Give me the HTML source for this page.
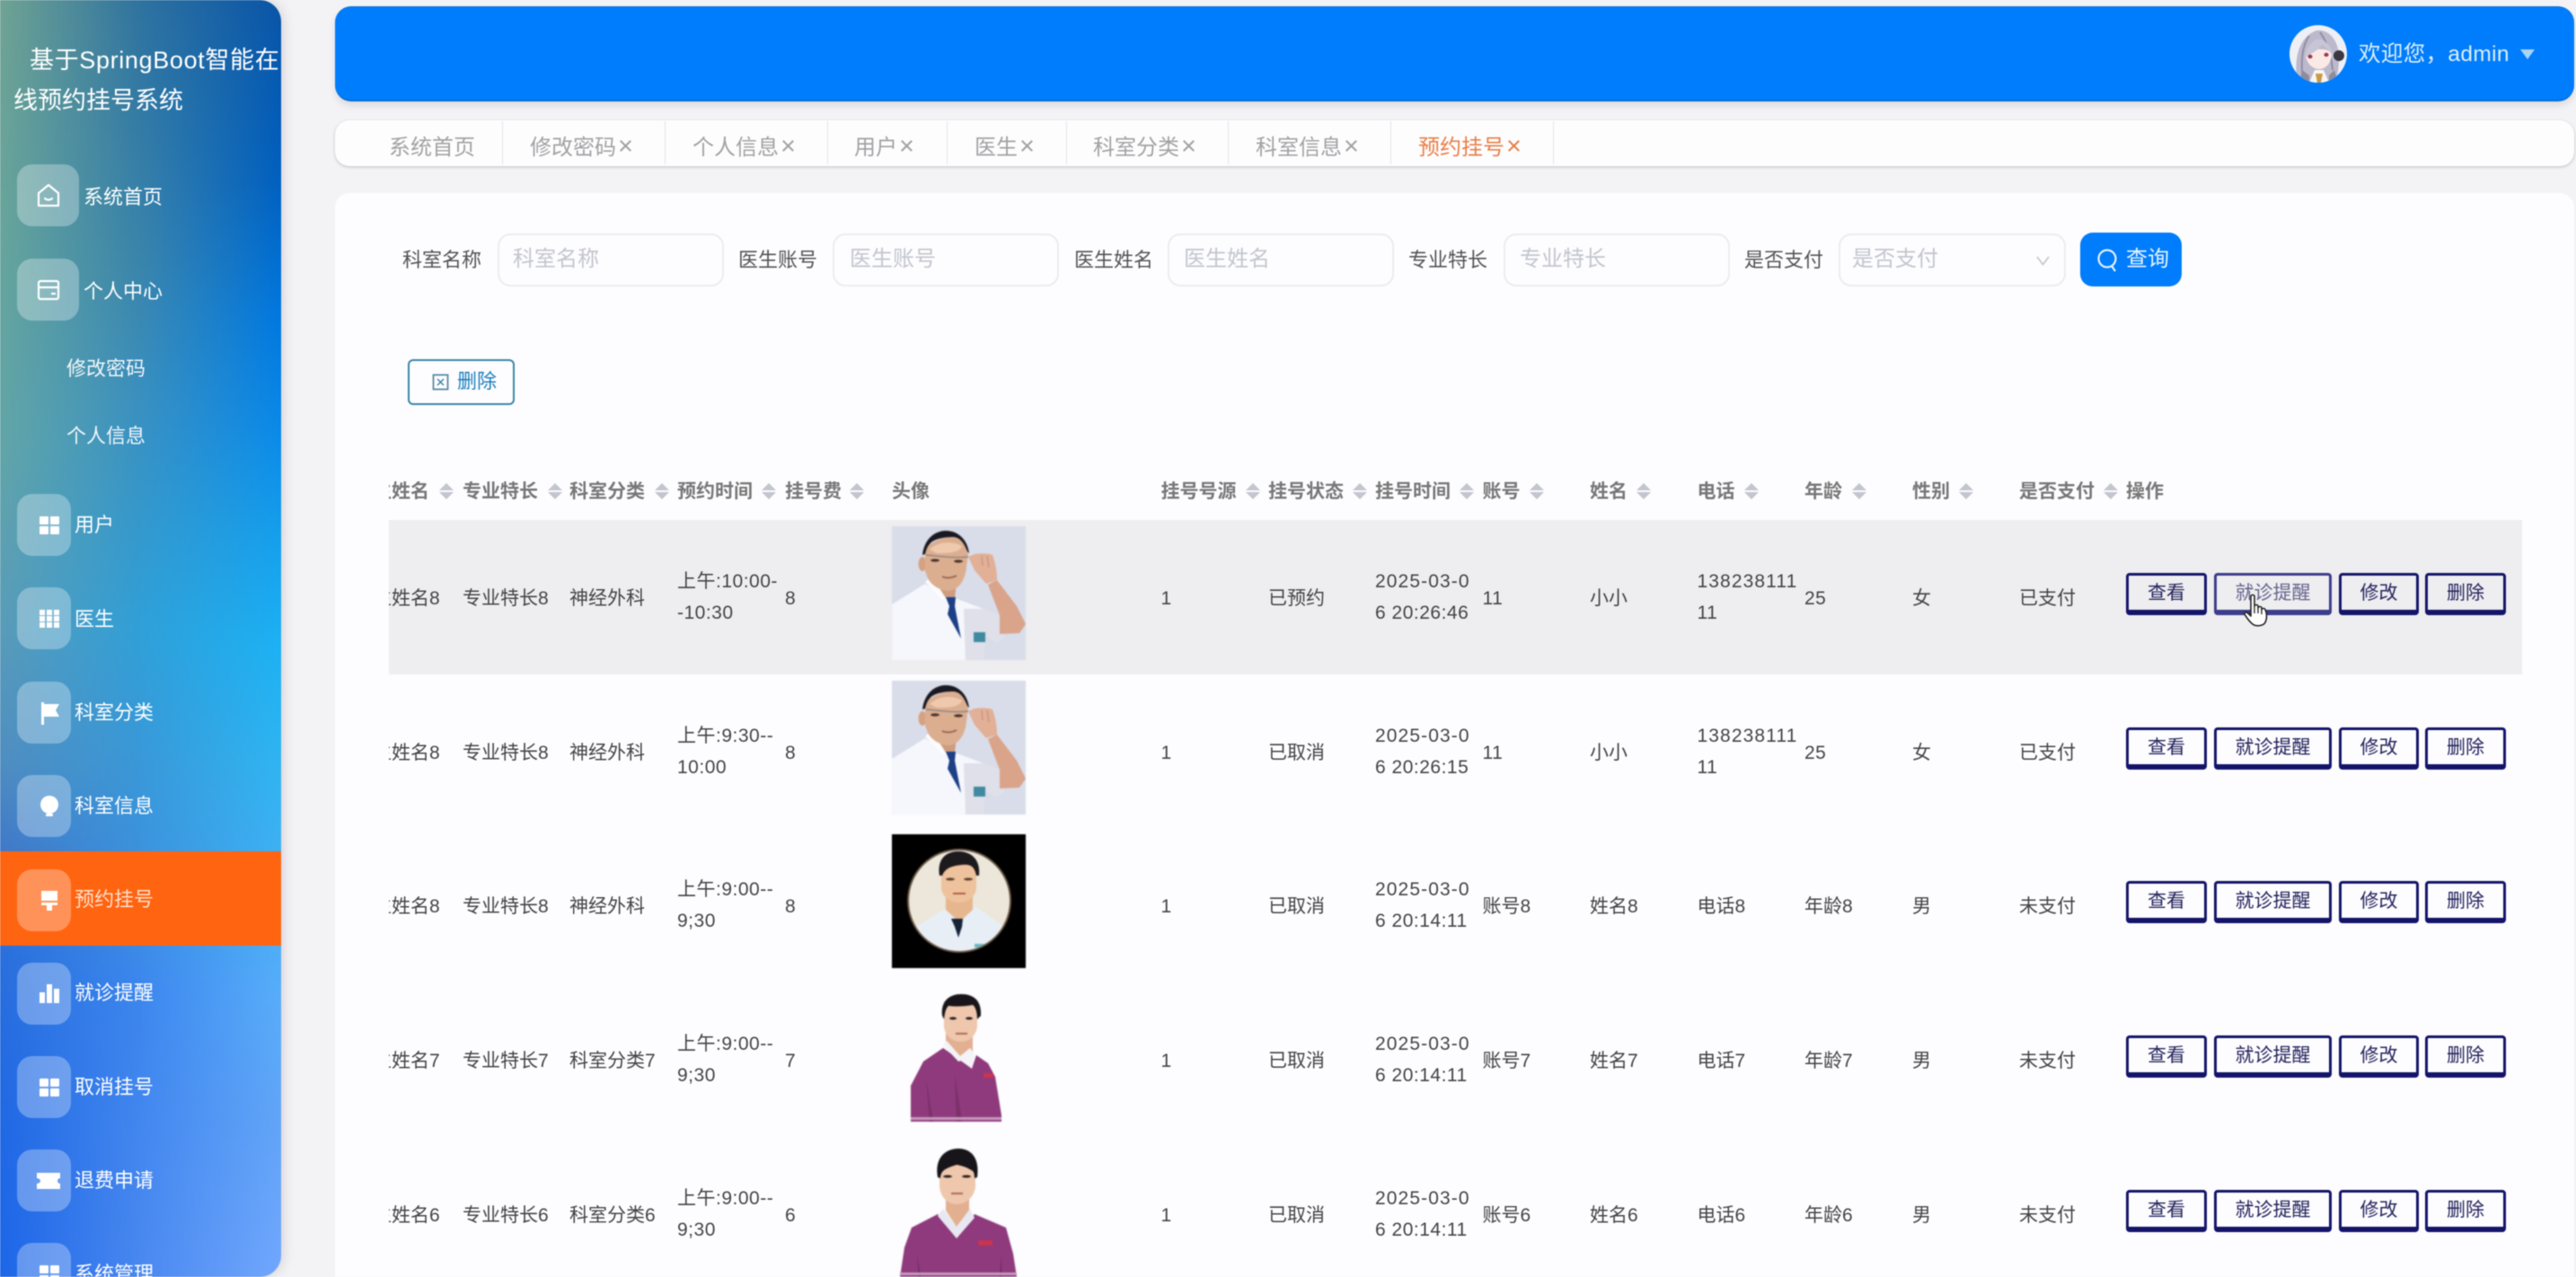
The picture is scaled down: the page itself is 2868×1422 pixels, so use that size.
<!DOCTYPE html>
<html lang="zh-CN">
<head>
<meta charset="utf-8">
<title>预约挂号</title>
<style>
*{box-sizing:border-box;margin:0;padding:0}
html,body{width:2868px;height:1422px;overflow:hidden;background:#f3f2f5;font-family:"Liberation Sans","Noto Sans CJK SC",sans-serif;color:#555}
#root{position:absolute;left:0;top:0;width:2868px;height:1422px;overflow:hidden;background:#f3f2f5;filter:blur(.45px)}
.a{position:absolute;white-space:nowrap}
#side{position:absolute;left:0;top:0;width:313px;height:1422px;border-radius:0 24px 24px 0;overflow:hidden}
#wrapshadow{position:absolute;left:0;top:0;width:313px;height:1422px;border-radius:0 24px 24px 0;box-shadow:0 0 16px rgba(0,0,0,.16)}
.gr{position:absolute;inset:0}
#g1{background:linear-gradient(180deg,#0a55a8 0,#0060c0 200px,#0078e0 350px,#0a8aea 480px,#15a0ee 600px,#1db2f5 720px,#30b5f2 850px,#45b0f5 1000px,#58aefa 1100px,#62a5f8 1250px,#72a8fe 1422px)}
#g2{background:linear-gradient(180deg,#2f73a0 0,#3a85ac 300px,#3a90c0 450px,#30a0d8 700px,#3a98d8 850px,#3c90e0 1000px,#3c86ee 1100px,#4a88f0 1422px);-webkit-mask-image:linear-gradient(90deg,#000 50%,transparent 100%);mask-image:linear-gradient(90deg,#000 50%,transparent 100%)}
#g3{background:linear-gradient(180deg,#70a393 0,#66a59d 300px,#62a5a8 500px,#5a9bb8 700px,#4f8dc0 850px,#4078c8 950px,#2a6fdc 1060px,#2068e4 1250px,#1c66e8 1422px);-webkit-mask-image:linear-gradient(90deg,#000 0,transparent 50%);mask-image:linear-gradient(90deg,#000 0,transparent 50%)}
#active{position:absolute;left:0;top:948px;width:313px;height:105px;background:#ff6411}
.title{position:absolute;color:#fff;font-size:27px;line-height:45px;white-space:nowrap}
.box{position:absolute;left:19px;width:60px;height:69px;border-radius:17px;background:rgba(255,255,255,.3)}
.box.w{width:69px}
.box svg{position:absolute;left:22px;top:20px;width:26px;height:30px;fill:#fff}
.mi{position:absolute;color:#fff;font-size:22px;line-height:30px;white-space:nowrap}
#hdr{position:absolute;left:373px;top:7px;width:2493px;height:106px;background:#007dfc;border-radius:18px;box-shadow:0 5px 8px rgba(0,0,0,.09);border-top:1px solid #0d6fd6;border-bottom:2px solid #0a6ed2}
#tabs{position:absolute;left:373px;top:134px;width:2493px;height:51px;background:#fefdfe;border-radius:16px;box-shadow:0 1px 3px rgba(0,0,0,.22)}
.sep{position:absolute;top:135px;width:1px;height:48px;background:#e4e3e6}
.tab{position:absolute;top:147px;font-size:24px;line-height:36px;color:#a2a2a4;white-space:nowrap}
.tab i{font-style:normal;font-size:29px;line-height:30px;margin-left:2px}
#panel{position:absolute;left:373px;top:215px;width:2493px;height:1207px;background:#fdfcfe;border-radius:16px 16px 0 0}
.lab{position:absolute;top:274px;font-size:22px;line-height:32px;color:#535355;white-space:nowrap}
.inp{position:absolute;top:260px;height:59px;width:252px;border:2px solid #ececef;border-radius:14px;background:#fdfcfe}
.ph{position:absolute;top:271px;font-size:24px;line-height:36px;color:#c3c6cf;white-space:nowrap}
#tb{position:absolute;left:433px;top:510px;width:2375px;height:912px;overflow:hidden}
.h{position:absolute;top:21px;font-size:21px;line-height:34px;color:#666;font-weight:700;white-space:nowrap;opacity:.88}
.s{position:absolute;top:28px;width:16px;height:18px}
.s:before,.s:after{content:"";position:absolute;left:0;width:0;height:0;border-left:8px solid transparent;border-right:8px solid transparent}
.s:before{top:0;border-bottom:8px solid #c3c5cf}
.s:after{bottom:0;border-top:8px solid #c3c5cf}
.r{position:absolute;left:0;width:2375px;height:172px}
.r.hv{background:#eeedef}
.c{position:absolute;top:70px;font-size:21px;line-height:35px;color:#444446;white-space:nowrap}
.c.t{top:51px}
.n{letter-spacing:.5px}
.w1{letter-spacing:1.1px}
.im{position:absolute;left:560px;top:7px;width:149px;height:149px;display:block;filter:blur(.5px)}
.b{position:absolute;top:59px;height:47px;border:3px solid #14146a;border-bottom-width:6px;border-radius:4px;font-size:21px;line-height:39px;text-align:center;color:#25255f;background:transparent;white-space:nowrap}
.b1{left:1934px;width:90px}
.b2{left:2032px;width:131px}
.b3{left:2171px;width:89px}
.b4{left:2267px;width:90px}
.b.hov{border-color:#3d3d8d;color:#66668f}
</style>
</head>
<body>
<svg width="0" height="0" style="position:absolute">
<defs>
<symbol id="d1" viewBox="0 0 149 149">
<rect width="149" height="149" fill="#d9dde9"/>
<path d="M0 87L37 64L60 80L70 80L102 92L120 99L125 124L117 129L104 122L102 149L0 149Z" fill="#f5f7fc"/>
<path d="M80 92L102 92L120 99L125 124L117 129L104 122L102 149L82 149Z" fill="#dfe0e9"/>
<path d="M37 62L45 55L70 72L62 82L56 82Z" fill="#fbfcfe"/>
<path d="M46 58L72 62L70 80L60 80Z" fill="#cf9c80"/>
<ellipse cx="34" cy="42" rx="4.500" ry="8" fill="#d5a283"/>
<path d="M37 28C40 18 55 12 69 12C78 14 84 22 85 30L83 45C82 58 76 70 64 72C54 72 44 66 40 58L37 50Z" fill="#dcae90"/>
<path d="M42 26C50 18 65 15 78 22C76 30 60 30 50 30Z" fill="#efc9ae"/>
<path d="M34 32C36 14 48 5 60 5C74 5 84 15 86 30L84 28C80 18 76 13 69 12C58 12 46 14 42 20C39 23 38 27 37 31Z" fill="#1a1820"/>
<path d="M38 32C50 33 70 36 85 34" stroke="#8c8584" stroke-width="1.400" fill="none"/>
<ellipse cx="48" cy="38" rx="5" ry="1.600" fill="#4c342a"/><ellipse cx="74" cy="39" rx="5" ry="1.600" fill="#4c342a"/>
<path d="M56 56C60 58 66 58 72 55" stroke="#95604c" stroke-width="1.800" fill="none"/>
<path d="M60 79L71 79L70 89L77 125L62 98L64 89Z" fill="#1c3f86"/>
<path d="M117 60L139 89L149 109L142 119L120 120L120 99L107 65Z" fill="#d9a48a"/>
<path d="M85 34L92 31C98 30 108 30 112 32C115 40 117 50 117 60L105 64L92 49Z" fill="#e2af97"/>
<path d="M100 33L101 44M106 33L108 46" stroke="#c28c72" stroke-width="1"/>
<rect x="91" y="118" width="13" height="11" fill="#3f8aa0"/>
</symbol>
<symbol id="d2" viewBox="0 0 149 149">
<rect width="149" height="149" fill="#000"/>
<circle cx="75" cy="74" r="58" fill="#6b5a48"/>
<circle cx="75" cy="74" r="56" fill="#ece7da"/>
<clipPath id="cc"><circle cx="75" cy="74" r="56"/></clipPath>
<g clip-path="url(#cc)">
<path d="M27 103L57 84L94 81L125 103L128 140H22Z" fill="#e8eef6"/>
<path d="M60 68H90V84L75 98L60 84Z" fill="#e6b78e"/>
<path d="M55 28H94V60C93 70 84 76 75 76C65 76 56 70 55 60Z" fill="#eec29c"/>
<path d="M53 46C50 28 60 19 74 19C88 19 99 28 97 46L94 46C92 36 88 33 78 34C70 35 60 36 56 46Z" fill="#1d1a1e"/>
<ellipse cx="65" cy="50" rx="5" ry="1.500" fill="#5a4030"/><ellipse cx="85" cy="50" rx="5" ry="1.500" fill="#5a4030"/>
<path d="M68 66H82" stroke="#a8523c" stroke-width="1.800"/>
<path d="M66 94H79L78 103L74 115L70 103Z" fill="#152238"/>
<rect x="92" y="122" width="16" height="4" fill="#6cb7c4"/>
</g>
</symbol>
<symbol id="d3" viewBox="0 0 149 149">
<path d="M21 108L35 81L57 66L89 89L94 74L107 83L115 98L122 141L122 148L21 148Z" fill="#8e3a7c"/>
<path d="M70 95L78 148H72ZM38 100L46 148H42Z" fill="#7c3069"/>
<rect x="21" y="143" width="101" height="3" fill="#c79ac0"/>
<path d="M60 48H90V70L78 80L60 66Z" fill="#e2b090"/>
<path d="M57 63L61 58L76 75L87 66L92 73L89 89L78 80L74 81Z" fill="#f4f3f7"/>
<path d="M58 14H95V42C94 52 86 59 77 59C67 59 59 52 58 42Z" fill="#eec7ac"/>
<path d="M56 30C54 12 66 6 77 6C90 6 100 12 99 30L95 34C95 26 93 20 90 18C80 20 70 20 63 19C60 22 59 26 58 34Z" fill="#17151a"/>
<ellipse cx="68" cy="33" rx="4" ry="1.500" fill="#2a2020"/><ellipse cx="86" cy="33" rx="4" ry="1.500" fill="#2a2020"/>
<path d="M71 50H84" stroke="#a9604c" stroke-width="1.800"/>
<rect x="102" y="94" width="11" height="5" fill="#c8354f"/>
</symbol>
<symbol id="d4" viewBox="0 0 149 149">
<path d="M51 79L22 94L14 116L9 149H139L135 123L127 94L92 79L72 106Z" fill="#8e3a7c"/>
<path d="M28 125L32 149H30ZM122 125L120 149H122Z" fill="#6f2a60"/>
<rect x="9" y="144" width="130" height="3" fill="#c79ac0"/>
<path d="M60 55H86V75L72 93L60 75Z" fill="#e2b090"/>
<path d="M51 81L57 73L72 93L87 73L92 83L72 106Z" fill="#e8e8f2"/>
<path d="M53 18H93V48C92 60 82 68 72 68C62 68 54 60 53 48Z" fill="#eec7ac"/>
<path d="M51 38C47 16 60 6 74 6C88 6 98 16 95 38L92 39C92 34 91 32 90 31C84 27 78 25 72 24C66 26 60 28 57 31C55 33 54 36 54 39Z" fill="#17151a"/>
<ellipse cx="62" cy="37" rx="5" ry="1.500" fill="#2a2020"/><ellipse cx="83" cy="37" rx="5" ry="1.500" fill="#2a2020"/>
<path d="M66 56H79" stroke="#a9604c" stroke-width="1.800"/>
<rect x="96" y="108" width="16" height="6" fill="#c8354f"/>
</symbol>
<symbol id="g4" viewBox="0 0 26 30"><rect x="2" y="5" width="10" height="9" rx="1"/><rect x="14" y="5" width="10" height="9" rx="1"/><rect x="2" y="16" width="10" height="9" rx="1"/><rect x="14" y="16" width="10" height="9" rx="1"/></symbol>
</defs>
</svg>

<div id="root">
<div id="wrapshadow"></div>
<div id="side">
<div class="gr" id="g1"></div><div class="gr" id="g2"></div><div class="gr" id="g3"></div>
<div id="active"></div>
<div class="title" style="left:33px;top:45px;letter-spacing:.65px">基于SpringBoot智能在</div>
<div class="title" style="left:15px;top:90px">线预约挂号系统</div>

<div class="box w" style="top:183px"><svg viewBox="0 0 26 30" style="fill:none;stroke:#fff;stroke-width:2.2"><path d="M2 12L13 3L24 12V26H2Z" stroke-linejoin="round"/><path d="M9 18C11 20 15 20 17 18" stroke-linecap="round"/></svg></div>
<div class="mi" style="left:93px;top:205px">系统首页</div>
<div class="box w" style="top:288px"><svg viewBox="0 0 26 30" style="fill:none;stroke:#fff;stroke-width:2.2"><rect x="2" y="5" width="22" height="20" rx="2"/><path d="M2 12H24M16 19H21"/></svg></div>
<div class="mi" style="left:93px;top:310px">个人中心</div>
<div class="mi" style="left:74px;top:396px;opacity:.92">修改密码</div>
<div class="mi" style="left:74px;top:471px;opacity:.92">个人信息</div>

<div class="box" style="top:550px"><svg viewBox="0 0 26 30" style="left:23px"><use href="#g4"/></svg></div>
<div class="mi" style="left:83px;top:570px">用户</div>
<div class="box" style="top:654px"><svg viewBox="0 0 26 30" style="left:23px"><path d="M2 5H8V11H2ZM10 5H16V11H10ZM18 5H24V11H18ZM2 12H8V18H2ZM10 12H16V18H10ZM18 12H24V18H18ZM2 19H8V25H2ZM10 19H16V25H10ZM18 19H24V25H18Z"/></svg></div>
<div class="mi" style="left:83px;top:675px">医生</div>
<div class="box" style="top:759px"><svg viewBox="0 0 26 30" style="left:23px"><path d="M4 3H7V5H24L20 12L24 19H7V28H4Z"/></svg></div>
<div class="mi" style="left:83px;top:779px">科室分类</div>
<div class="box" style="top:863px"><svg viewBox="0 0 26 30" style="left:23px"><circle cx="13" cy="13" r="10"/><rect x="9" y="23" width="8" height="3" rx="1"/></svg></div>
<div class="mi" style="left:83px;top:883px">科室信息</div>
<div class="box" style="top:968px"><svg viewBox="0 0 26 30" style="left:23px"><path d="M4 4H22V15H4ZM4 17H22V20H16V26H10V20H4Z"/></svg></div>
<div class="mi" style="left:83px;top:987px;color:#ffe0cc">预约挂号</div>
<div class="box" style="top:1072px"><svg viewBox="0 0 26 30" style="left:23px"><rect x="2" y="13" width="6" height="12"/><rect x="10" y="4" width="6" height="21"/><rect x="18" y="9" width="6" height="16"/></svg></div>
<div class="mi" style="left:83px;top:1091px">就诊提醒</div>
<div class="box" style="top:1176px"><svg viewBox="0 0 26 30" style="left:23px"><use href="#g4"/></svg></div>
<div class="mi" style="left:83px;top:1196px">取消挂号</div>
<div class="box" style="top:1280px"><svg viewBox="0 0 26 30" style="left:21px;width:28px"><path d="M0 6H26V12C24 12 23 13.500 23 15C23 16.500 24 18 26 18V24H0V18C2 18 4 16.500 4 15C4 13.500 2 12 0 12Z"/></svg></div>
<div class="mi" style="left:83px;top:1300px">退费申请</div>
<div class="box" style="top:1384px"><svg viewBox="0 0 26 30" style="left:23px"><use href="#g4"/></svg></div>
<div class="mi" style="left:83px;top:1404px">系统管理</div>
</div>

<div id="hdr"></div>
<svg class="a" style="left:2549px;top:28px" width="64" height="64" viewBox="0 0 64 64">
<clipPath id="av"><circle cx="32" cy="32" r="32"/></clipPath>
<g clip-path="url(#av)">
<rect width="64" height="64" fill="#eef0f6"/>
<path d="M9 64C5 42 8 14 30 6C46 4 56 20 55 38C55 50 53 58 50 64Z" fill="#bcb9cc"/>
<path d="M22 12C16 20 13 34 14 52M34 8C40 16 46 28 48 50" stroke="#918ea6" stroke-width="2" fill="none"/>
<path d="M18 32C18 26 46 24 47 32C47 42 40 49 33 49C26 49 18 42 18 32Z" fill="#fbe9e6"/>
<path d="M17 36C19 22 28 14 36 16C44 20 48 28 48 34C44 28 40 24 36 22C32 28 24 32 17 36Z" fill="#c8c5d6"/>
<ellipse cx="23" cy="35" rx="2.600" ry="2.200" fill="#a03a58"/><ellipse cx="41" cy="33" rx="2.600" ry="2.200" fill="#a03a58"/>
<path d="M22 64L28 50H38L44 64Z" fill="#f8f6f2"/><path d="M29 54H37L35 64H31Z" fill="#c89a4a"/>
<path d="M11 64L14 50L22 56L22 64ZM44 56L50 50L54 64H44Z" fill="#8d8b9c"/>
<circle cx="55" cy="34" r="6" fill="#3c3842"/>
</g>
</svg>
<div class="a" style="left:2626px;top:43px;font-size:24.500px;line-height:36px;color:#dceefd;letter-spacing:.35px">欢迎您，admin</div>
<svg class="a" style="left:2806px;top:55px" width="16" height="11" viewBox="0 0 16 11"><path d="M0 0H16L8 11Z" fill="#a9d4fb"/></svg>

<div id="tabs"></div>
<div class="sep" style="left:559px"></div><div class="sep" style="left:740px"></div><div class="sep" style="left:921px"></div><div class="sep" style="left:1054px"></div><div class="sep" style="left:1187px"></div><div class="sep" style="left:1367px"></div><div class="sep" style="left:1548px"></div><div class="sep" style="left:1729px"></div>
<div class="tab" style="left:433px">系统首页</div>
<div class="tab" style="left:590px">修改密码<i>×</i></div>
<div class="tab" style="left:771px">个人信息<i>×</i></div>
<div class="tab" style="left:951px">用户<i>×</i></div>
<div class="tab" style="left:1085px">医生<i>×</i></div>
<div class="tab" style="left:1217px">科室分类<i>×</i></div>
<div class="tab" style="left:1398px">科室信息<i>×</i></div>
<div class="tab" style="left:1579px;color:#e97f47">预约挂号<i>×</i></div>

<div id="panel"></div>
<div class="lab" style="left:448px">科室名称</div><div class="inp" style="left:554px"></div><div class="ph" style="left:571px">科室名称</div>
<div class="lab" style="left:822px">医生账号</div><div class="inp" style="left:927px"></div><div class="ph" style="left:946px">医生账号</div>
<div class="lab" style="left:1196px">医生姓名</div><div class="inp" style="left:1300px"></div><div class="ph" style="left:1318px">医生姓名</div>
<div class="lab" style="left:1568px">专业特长</div><div class="inp" style="left:1674px"></div><div class="ph" style="left:1692px">专业特长</div>
<div class="lab" style="left:1942px">是否支付</div><div class="inp" style="left:2047px;width:253px"></div><div class="ph" style="left:2062px">是否支付</div>
<svg class="a" style="left:2267px;top:285px" width="15" height="11" viewBox="0 0 15 11"><path d="M1 1L7.500 9.500L14 1" fill="none" stroke="#c3c6cf" stroke-width="1.600"/></svg>
<div class="a" style="left:2316px;top:259px;width:113px;height:60px;background:#007dfc;border-radius:14px"></div>
<svg class="a" style="left:2335px;top:276px" width="23" height="27" viewBox="0 0 23 27"><circle cx="11" cy="12" r="9.500" fill="none" stroke="#e4f2ff" stroke-width="2.200"/><path d="M16 20L20 26" stroke="#e4f2ff" stroke-width="2.200"/></svg>
<div class="a" style="left:2367px;top:271px;font-size:24px;line-height:36px;color:#e8f4ff">查询</div>

<div class="a" style="left:454px;top:400px;width:119px;height:51px;border:2px solid #3a87a8;border-radius:6px;background:#fdfcfe"></div>
<svg class="a" style="left:481px;top:416px" width="19" height="19" viewBox="0 0 19 19"><rect x="1.500" y="1.500" width="16" height="16" fill="none" stroke="#5a8aa8" stroke-width="1.800"/><path d="M6 6L13 13M13 6L6 13" stroke="#3f86b0" stroke-width="1.500"/></svg>
<div class="a" style="left:509px;top:408px;font-size:22px;line-height:34px;color:#1d7fbe">删除</div>

<div id="tb">
<div class="h" style="left:-39px">医生姓名</div><div class="s" style="left:56px"></div>
<div class="h" style="left:82px">专业特长</div><div class="s" style="left:177px"></div>
<div class="h" style="left:201px">科室分类</div><div class="s" style="left:296px"></div>
<div class="h" style="left:321px">预约时间</div><div class="s" style="left:415px"></div>
<div class="h" style="left:441px">挂号费</div><div class="s" style="left:513px"></div>
<div class="h" style="left:560px">头像</div>
<div class="h" style="left:859.500px">挂号号源</div><div class="s" style="left:954px"></div>
<div class="h" style="left:979px">挂号状态</div><div class="s" style="left:1073px"></div>
<div class="h" style="left:1098px">挂号时间</div><div class="s" style="left:1192px"></div>
<div class="h" style="left:1217.500px">账号</div><div class="s" style="left:1270px"></div>
<div class="h" style="left:1337px">姓名</div><div class="s" style="left:1389px"></div>
<div class="h" style="left:1456.500px">电话</div><div class="s" style="left:1509px"></div>
<div class="h" style="left:1576px">年龄</div><div class="s" style="left:1629px"></div>
<div class="h" style="left:1696px">性别</div><div class="s" style="left:1748px"></div>
<div class="h" style="left:1815px">是否支付</div><div class="s" style="left:1909px"></div>
<div class="h" style="left:1934px">操作</div>

<div class="r hv" style="top:69px">
<div class="c" style="left:-39px">医生姓名8</div><div class="c" style="left:82px">专业特长8</div><div class="c" style="left:201px">神经外科</div>
<div class="c t n" style="left:321px">上午:10:00-<br>-10:30</div><div class="c n" style="left:441px">8</div>
<svg class="im"><use href="#d1"/></svg>
<div class="c n" style="left:859.500px">1</div><div class="c" style="left:979px">已预约</div>
<div class="c t n" style="left:1098px"><span class="w1">2025-03-0</span><br>6 20:26:46</div><div class="c n" style="left:1217.500px">11</div><div class="c" style="left:1337px">小小</div>
<div class="c t n" style="left:1456.500px"><span class="w1">138238111</span><br>11</div><div class="c n" style="left:1576px">25</div><div class="c" style="left:1696px">女</div><div class="c" style="left:1815px">已支付</div>
<div class="b b1">查看</div><div class="b b2 hov">就诊提醒</div><div class="b b3">修改</div><div class="b b4">删除</div>
</div>

<div class="r" style="top:241px">
<div class="c" style="left:-39px">医生姓名8</div><div class="c" style="left:82px">专业特长8</div><div class="c" style="left:201px">神经外科</div>
<div class="c t n" style="left:321px">上午:9:30--<br>10:00</div><div class="c n" style="left:441px">8</div>
<svg class="im"><use href="#d1"/></svg>
<div class="c n" style="left:859.500px">1</div><div class="c" style="left:979px">已取消</div>
<div class="c t n" style="left:1098px"><span class="w1">2025-03-0</span><br>6 20:26:15</div><div class="c n" style="left:1217.500px">11</div><div class="c" style="left:1337px">小小</div>
<div class="c t n" style="left:1456.500px"><span class="w1">138238111</span><br>11</div><div class="c n" style="left:1576px">25</div><div class="c" style="left:1696px">女</div><div class="c" style="left:1815px">已支付</div>
<div class="b b1">查看</div><div class="b b2">就诊提醒</div><div class="b b3">修改</div><div class="b b4">删除</div>
</div>

<div class="r" style="top:412px">
<div class="c" style="left:-39px">医生姓名8</div><div class="c" style="left:82px">专业特长8</div><div class="c" style="left:201px">神经外科</div>
<div class="c t n" style="left:321px">上午:9:00--<br>9;30</div><div class="c n" style="left:441px">8</div>
<svg class="im"><use href="#d2"/></svg>
<div class="c n" style="left:859.500px">1</div><div class="c" style="left:979px">已取消</div>
<div class="c t n" style="left:1098px"><span class="w1">2025-03-0</span><br>6 20:14:11</div><div class="c" style="left:1217.500px">账号8</div><div class="c" style="left:1337px">姓名8</div>
<div class="c" style="left:1456.500px">电话8</div><div class="c" style="left:1576px">年龄8</div><div class="c" style="left:1696px">男</div><div class="c" style="left:1815px">未支付</div>
<div class="b b1">查看</div><div class="b b2">就诊提醒</div><div class="b b3">修改</div><div class="b b4">删除</div>
</div>

<div class="r" style="top:584px">
<div class="c" style="left:-39px">医生姓名7</div><div class="c" style="left:82px">专业特长7</div><div class="c" style="left:201px">科室分类7</div>
<div class="c t n" style="left:321px">上午:9:00--<br>9;30</div><div class="c n" style="left:441px">7</div>
<svg class="im"><use href="#d3"/></svg>
<div class="c n" style="left:859.500px">1</div><div class="c" style="left:979px">已取消</div>
<div class="c t n" style="left:1098px"><span class="w1">2025-03-0</span><br>6 20:14:11</div><div class="c" style="left:1217.500px">账号7</div><div class="c" style="left:1337px">姓名7</div>
<div class="c" style="left:1456.500px">电话7</div><div class="c" style="left:1576px">年龄7</div><div class="c" style="left:1696px">男</div><div class="c" style="left:1815px">未支付</div>
<div class="b b1">查看</div><div class="b b2">就诊提醒</div><div class="b b3">修改</div><div class="b b4">删除</div>
</div>

<div class="r" style="top:756px">
<div class="c" style="left:-39px">医生姓名6</div><div class="c" style="left:82px">专业特长6</div><div class="c" style="left:201px">科室分类6</div>
<div class="c t n" style="left:321px">上午:9:00--<br>9;30</div><div class="c n" style="left:441px">6</div>
<svg class="im"><use href="#d4"/></svg>
<div class="c n" style="left:859.500px">1</div><div class="c" style="left:979px">已取消</div>
<div class="c t n" style="left:1098px"><span class="w1">2025-03-0</span><br>6 20:14:11</div><div class="c" style="left:1217.500px">账号6</div><div class="c" style="left:1337px">姓名6</div>
<div class="c" style="left:1456.500px">电话6</div><div class="c" style="left:1576px">年龄6</div><div class="c" style="left:1696px">男</div><div class="c" style="left:1815px">未支付</div>
<div class="b b1">查看</div><div class="b b2">就诊提醒</div><div class="b b3">修改</div><div class="b b4">删除</div>
</div>
</div>

<svg class="a" style="left:2497px;top:661px" width="30" height="38" viewBox="0 0 30 38"><path d="M9 3C9 1 13 1 13 3V14C13 12 17 12 17 14V16C17 14 21 14 21 16V18C21 16 25 16 25 18C27 22 27 28 25 32C23 36 15 37 11 34C7 31 4 26 2 23C1 21 4 20 6 22L9 25Z" fill="#fff" stroke="#222" stroke-width="1.600" stroke-linejoin="round"/><path d="M13 14V22M17 16V22M21 18V23" stroke="#222" stroke-width="1.300" fill="none"/></svg>
</div>
</body>
</html>
